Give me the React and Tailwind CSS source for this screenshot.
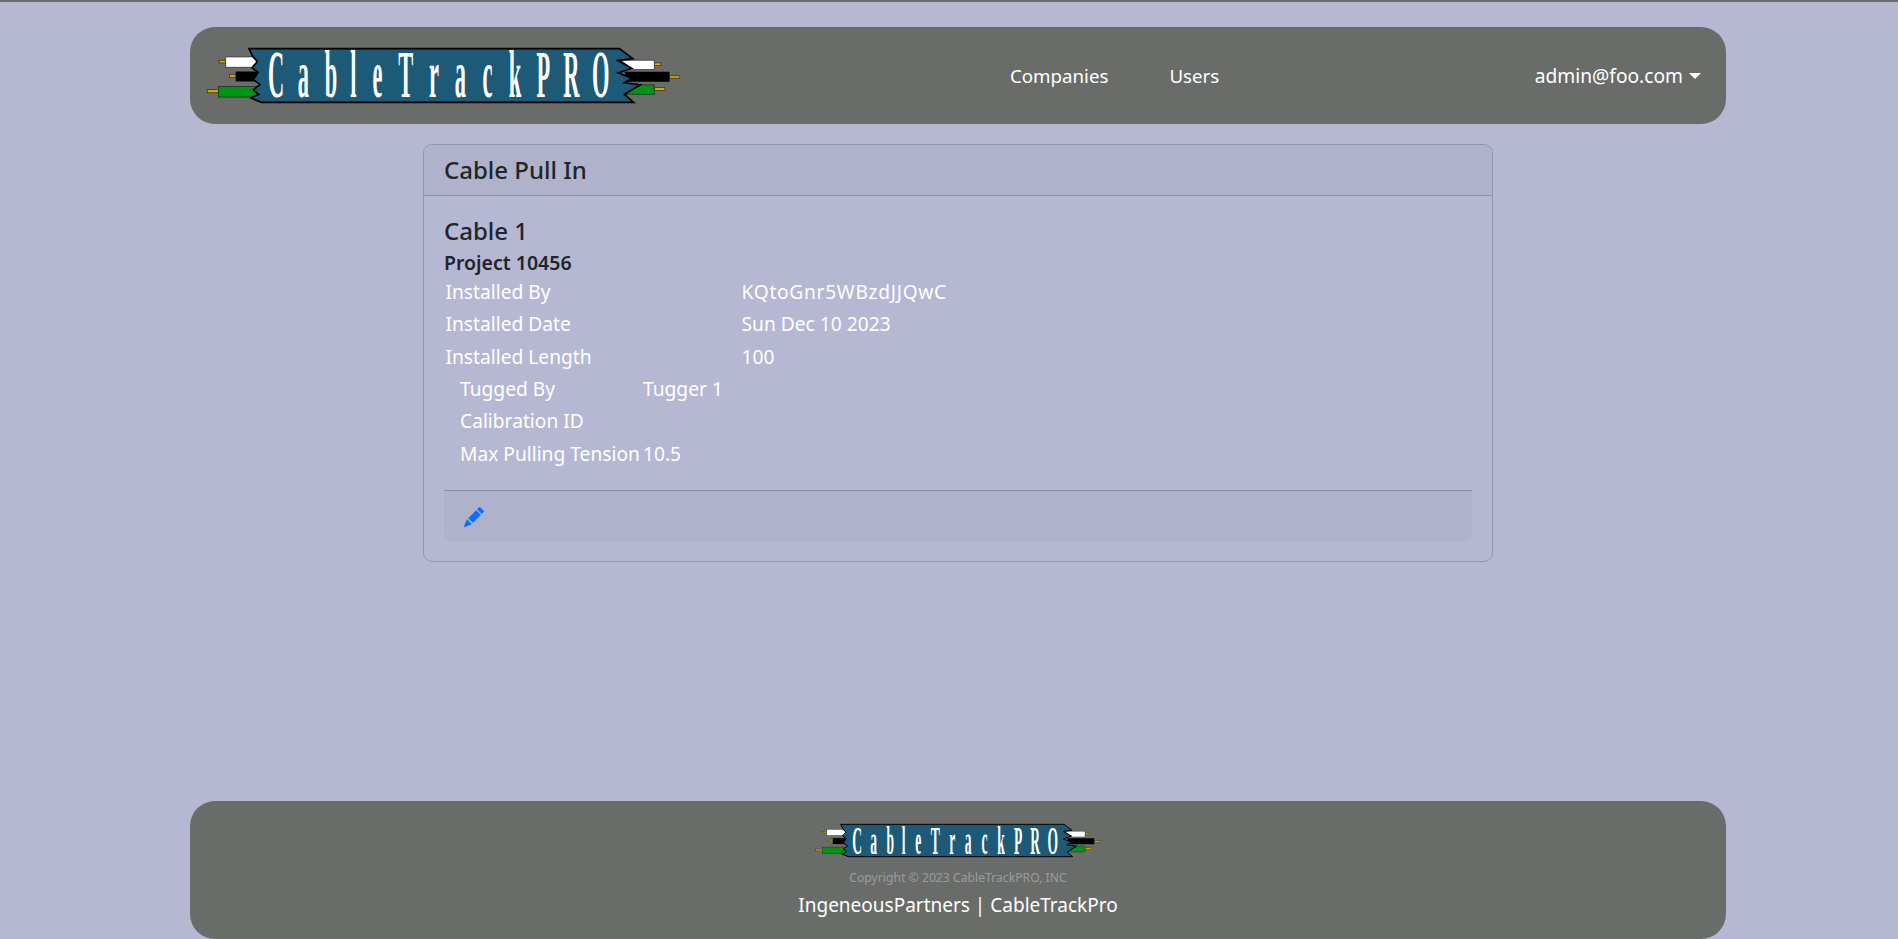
import React from "react";
import { BsPencilFill } from "react-icons/bs";

const SCALE = 0.33;
const FONT_SIZE = 205;
const glyphs = [
  [0.722, 258.5], [0.5, 341], [0.556, 424.5], [0.278, 492], [0.444, 564.5], [0.667, 650], [0.444, 735.5],
  [0.5, 815], [0.444, 896.5], [0.556, 979.5], [0.611, 1065], [0.722, 1150], [0.778, 1238.5],
];
const xList = glyphs.map(([w, c]) => ((c - (w * FONT_SIZE * SCALE) / 2) / SCALE).toFixed(1)).join(" ");

function Logo({ className }) {
  const pin = "#e0ac00";
  const edge = "#2a2a10";
  return (
    <svg viewBox="48 142 1432 172" className={className}>
      <rect x="87" y="182" width="20" height="8" fill={pin} stroke={edge} strokeWidth="2" />
      <rect x="118" y="226" width="20" height="8" fill={pin} stroke={edge} strokeWidth="2" />
      <rect x="51" y="271" width="34" height="9" fill={pin} stroke={edge} strokeWidth="2" />
      <rect x="1400" y="190" width="20" height="8" fill={pin} stroke={edge} strokeWidth="2" />
      <rect x="1446" y="229" width="31" height="7" fill={pin} stroke={edge} strokeWidth="2" />
      <rect x="1400" y="265" width="32" height="8" fill={pin} stroke={edge} strokeWidth="2" />
      <rect x="107" y="172" width="95" height="31" fill="#fff" stroke="#222" strokeWidth="2" />
      <rect x="137" y="216" width="65" height="30" fill="#000" />
      <rect x="85" y="261" width="125" height="32" fill="#009512" stroke="#222" strokeWidth="2" />
      <path d="M1300 182H1400V210H1335Z" fill="#fff" stroke="#222" strokeWidth="2" />
      <path d="M1310 217H1446V247H1320Z" fill="#000" />
      <path d="M1360 256H1400V285H1310Z" fill="#009512" stroke="#222" strokeWidth="2" />
      <path
        d="M177 147H1295L1335 177L1290 183L1332 206L1292 220L1332 237L1310 250L1358 256L1310 285L1338 309H215L183 296L206 285L190 272L210 255L190 240L205 218L186 205L202 186L188 170Z"
        fill="#1c5a78"
        stroke="#000"
        strokeWidth="5"
        strokeLinejoin="miter"
      />
      <text
        transform={`scale(${SCALE} 1)`}
        x={xList}
        y="294"
        fontFamily="'Liberation Serif', serif"
        fontWeight="700"
        fontSize={FONT_SIZE}
        fill="#fff"
      >
        CableTrackPRO
      </text>
    </svg>
  );
}

function Row({ label, value, labelWidth, sub, valueClass }) {
  return (
    <div className={`flex h-[32.4px] items-center text-white text-[19.2px] ${sub ? "pl-[16px]" : "pl-[1.5px]"}`}>
      <span className="shrink-0" style={{ width: labelWidth }}>{label}</span>
      <span className={valueClass}>{value}</span>
    </div>
  );
}

export default function App() {
  return (
    <div className="min-h-screen flex flex-col border-t-2 border-[#6a6c6a] bg-[#b6b7d3] pl-[18px] font-['Noto_Sans',sans-serif] text-[#212529]">
      <header className="mx-auto mt-[25px] h-[97px] w-[1536px] shrink-0 rounded-[25px] bg-[#6a6c6a] flex items-center text-white text-[19px] pl-[15px] pr-[25px]">
        <Logo className="w-[477px] h-[57px]" />
        <nav className="ml-[328px] flex gap-[61px] pt-[1px] text-[18.7px]">
          <a>Companies</a>
          <a>Users</a>
        </nav>
        <div className="ml-auto flex items-center gap-[6px] pt-[1px]">
          <span className="text-[19.2px]">admin@foo.com</span>
          <span className="h-0 w-0 border-x-[6px] border-t-[6px] border-x-transparent border-t-white" />
        </div>
      </header>

      <main className="mx-auto mt-[20px] w-[1070px] rounded-[9px] border border-[#00000030]">
        <div className="h-[51px] flex items-center border-b border-[#00000030] bg-[#b0b1ca] rounded-t-[8px] px-[20px] text-[24px] font-medium">
          Cable Pull In
        </div>
        <div className="p-[20px]">
          <div className="text-[24px] font-medium leading-[29px]">Cable 1</div>
          <div className="text-[19.5px] font-semibold leading-[26.3px] pt-[4.8px]">Project 10456</div>
          <Row label="Installed By" value="KQtoGnr5WBzdJJQwC" labelWidth={296} valueClass="tracking-[0.7px]" />
          <Row label="Installed Date" value="Sun Dec 10 2023" labelWidth={296} />
          <Row label="Installed Length" value="100" labelWidth={296} />
          <Row sub label="Tugged By" value="Tugger 1" labelWidth={183} />
          <Row sub label="Calibration ID" value="" labelWidth={183} />
          <Row sub label="Max Pulling Tension" value="10.5" labelWidth={183} />
          <div className="mt-[19.7px] h-[51px] flex items-center rounded-b-[8px] border-t border-[#00000030] bg-[#b0b1ca] pl-[20px] pt-[2px] text-[#0d6efd]">
            <BsPencilFill className="w-[20px] h-[20px]" />
          </div>
        </div>
      </main>

      <footer className="mx-auto mt-auto h-[138px] w-[1536px] shrink-0 rounded-[25px] bg-[#6a6c6a] flex flex-col items-center text-white">
        <Logo className="mt-[22px] w-[286px] h-[35px]" />
        <div className="mt-[11px] text-[12.2px] leading-[18px] text-[#9a9da0]">Copyright © 2023 CableTrackPRO, INC</div>
        <div className="mt-[5px] text-[19px] leading-[27px]">IngeneousPartners | CableTrackPro</div>
      </footer>
    </div>
  );
}
